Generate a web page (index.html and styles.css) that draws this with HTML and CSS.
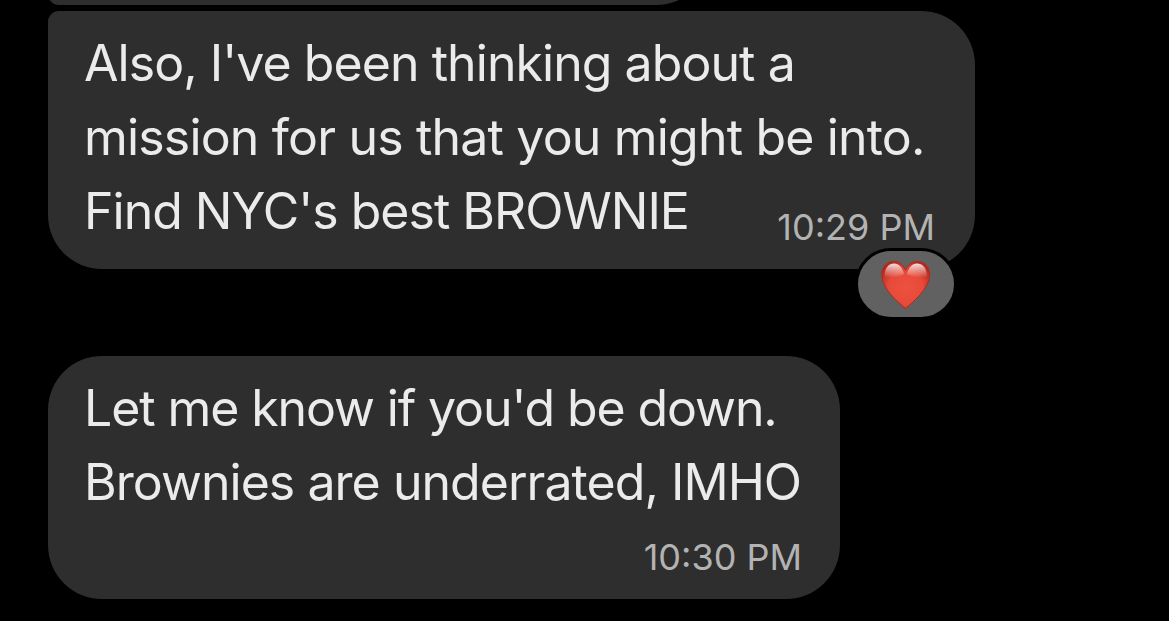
FILE: index.html
```
<!DOCTYPE html>
<html lang="en">
<head>
  <meta charset="UTF-8" />
  <meta name="viewport" content="width=device-width, initial-scale=1.0"/>
  <title>Messages</title>
  <link rel="stylesheet" href="styles.css">
</head>
<body>

<div class="chat">
  <div class="bubble bubble-prev"></div>

  <div class="bubble bubble-mission">
    <p class="text">
      <span class="line l1">Also, I've been thinking about a</span>
      <span class="line l2">mission for us that you might be into.</span>
      <span class="line l3">Find NYC's best BROWNIE</span>
    </p>
    <span class="time">10:29 PM</span>
    <div class="reaction">
      <svg class="heart" viewBox="0 0 50 50">
        <defs>
          <radialGradient id="body" cx="50%" cy="55%" r="60%">
            <stop offset="0" stop-color="#ee513e"/>
            <stop offset="0.6" stop-color="#e64a3a"/>
            <stop offset="1" stop-color="#b3281d"/>
          </radialGradient>
          <linearGradient id="shine" x1="0" y1="0" x2="0" y2="1">
            <stop offset="0" stop-color="#fff" stop-opacity="0.85"/>
            <stop offset="1" stop-color="#fff" stop-opacity="0"/>
          </linearGradient>
        </defs>
        <path fill="url(#body)" stroke="#b02a1e" d="M24.500 49C21 45 16 41.500 11 36C5 29 .8 22 .8 14.500C.8 6.500 6 1.500 12.800 1.500C18.500 1.500 22.500 5 24.500 10.500C26.500 5 30.500 1.500 36.200 1.500C43 1.500 48.700 6.500 48.700 14.500C48.700 22 44 29 38 36C33 41.500 28 45 24.500 49Z"/>
        <path fill="url(#shine)" d="M3.500 16C4 7 8 3.500 13 3.500C18 3.500 21 7 23 14C19 17 9 19 3.500 16Z"/>
        <path fill="url(#shine)" d="M46 16C45.500 7 41 3.500 36 3.500C31 3.500 28 7 26 14C30 17 40.500 19 46 16Z"/>
      </svg>
    </div>
  </div>

  <div class="bubble bubble-down">
    <p class="text">
      <span class="line l4">Let me know if you'd be down.</span>
      <span class="line l5">Brownies are underrated, IMHO</span>
    </p>
    <span class="time">10:30 PM</span>
  </div>
</div>

</body>
</html>
```

FILE: styles.css
```
* {
  box-sizing: border-box;
}

body {
  margin: 0;
  background: #000;
  font-family: Inter, "Liberation Sans", sans-serif;
}

.chat {
  display: flex;
  flex-direction: column;
  justify-content: flex-end;
  align-items: flex-start;
  height: 621px;
  padding: 0 0 22px 48px;
  overflow: hidden;
}

.bubble {
  position: relative;
  display: flex;
  flex-shrink: 0;
  padding: 15px 38px 0 36px;
  border-radius: 54px;
  background: #2e2e2e;
}

.bubble-prev {
  width: 662px;
  height: 120px;
  margin-bottom: 6px;
  border-bottom-left-radius: 11px;
}

.bubble-mission {
  width: 927px;
  height: 258px;
  margin-bottom: 87px;
  padding-right: 40px;
  border-top-left-radius: 11px;
  justify-content: space-between;
  align-items: flex-start;
}

.bubble-down {
  flex-direction: column;
  width: 792px;
  height: 243px;
}

.text {
  margin: 0;
  color: #ebebeb;
  font-size: 50px;
  line-height: 74px;
  white-space: nowrap;
}

.line {
  display: block;
}

.l1 {
  letter-spacing: -0.94px;
}

.l2 {
  letter-spacing: -0.82px;
}

.l3 {
  letter-spacing: -1px;
}

.l4 {
  letter-spacing: -1.1px;
}

.l5 {
  letter-spacing: -0.95px;
}

.time {
  color: #b3b3b3;
  font-size: 36px;
  line-height: 40px;
}

.bubble-mission .time {
  margin-top: 181px;
  margin-left: -200px;
}

.bubble-down .time {
  align-self: flex-end;
  margin-top: 18px;
}

.reaction {
  position: absolute;
  right: 18px;
  bottom: -51px;
  display: flex;
  justify-content: center;
  align-items: center;
  width: 102px;
  height: 72px;
  border: 3px solid #000;
  border-radius: 36px;
  background: #616161;
}

.heart {
  width: 50px;
  height: 50px;
  margin-top: 2px;
}
```
